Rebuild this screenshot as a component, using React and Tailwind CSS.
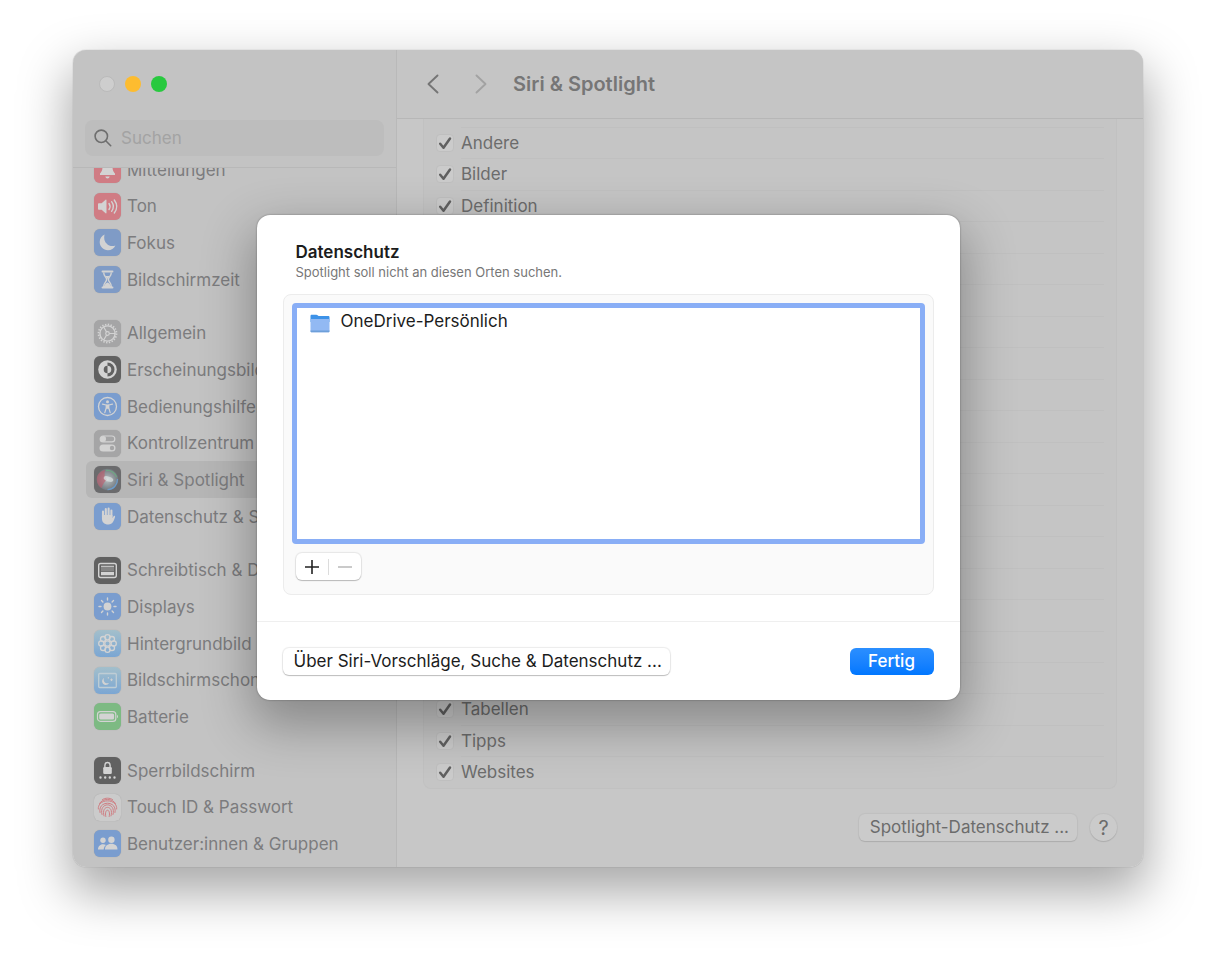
import { useState } from 'react';

const TILES = {
  red: 'bg-[#d07c84]',
  blue: 'bg-[#7a9dcf]',
  indigo: 'bg-[#7f9bc6]',
  gray: 'bg-[#a5a5a6]',
  dark: 'bg-[#616161]',
  siri: 'bg-[#6b6b6d]',
  sky: 'bg-linear-to-b from-[#a3bfcb] to-[#7ba6d3]',
  green: 'bg-[#7dba83]',
  light: 'bg-[#cbcbcb]',
};

const G = '#d3d3d3';

/* ── Glyphs, all drawn on a 27x27 tile ── */
const GLYPHS = {
  bell: (
    <>
      <path d="M13.5 5c-3.6 0-5 2.600-5 5.500 0 4-1 5.500-2.500 7v1.500h15v-1.500c-1.500-1.500-2.500-3-2.500-7 0-2.900-1.400-5.500-5-5.500z" fill={G} />
      <path d="M11.300 20.500h4.400c-.3 1.300-1.100 2-2.200 2s-1.900-.7-2.200-2z" fill={G} />
    </>
  ),
  sound: (
    <>
      <path d="M4 11.200c0-.6.4-1 1-1h2.600l4-3.500c.4-.4.9-.2.9.5v12.600c0 .7-.5.9-.9.500l-4-3.500H5c-.6 0-1-.4-1-1z" fill={G} />
      <path d="M15 10.500c1.300 1.800 1.300 4.200 0 6M17.600 8.700c2.200 2.900 2.200 6.700 0 9.600M20.300 7c3 4 3 9 0 13" fill="none" stroke={G} strokeWidth="1.400" strokeLinecap="round" />
    </>
  ),
  moon: <path d="M10.600 5.600c-3 1.300-4.900 4.200-4.900 7.500 0 4.500 3.700 8.200 8.200 8.200 3.300 0 6.200-2 7.500-4.800-1 .4-1.900.5-2.900.5-4.600 0-8.300-3.700-8.300-8.300 0-1.100.1-2.100.4-3.100z" fill={G} />,
  hourglass: (
    <>
      <path d="M8.500 5.500h10M8.500 21.500h10" stroke={G} strokeWidth="1.900" strokeLinecap="round" />
      <path d="M9.700 6.500c0 4 2.900 4.500 2.900 7s-2.900 3-2.900 7h7.600c0-4-2.900-4.500-2.900-7s2.900-3 2.900-7" fill="none" stroke={G} strokeWidth="1.400" />
      <path d="M11.300 10h4.400l-2.200 3zM10.600 20c0-2 1.500-3 2.900-3.600 1.400.6 2.900 1.600 2.900 3.600z" fill={G} />
    </>
  ),
  gear: (
    <g fill="none" stroke={G}>
      <circle cx="13.500" cy="13.500" r="9" strokeWidth="1.800" strokeDasharray="1.400 1.427" />
      <circle cx="13.500" cy="13.500" r="7.600" strokeWidth="1.400" />
      <circle cx="13.500" cy="13.500" r="1.800" strokeWidth="1.200" />
      <path d="M15.300 13.500h5.800M12.600 12l-2.900-5M12.600 15l-2.900 5" strokeWidth="1.200" />
    </g>
  ),
  contrast: (
    <>
      <circle cx="13.500" cy="13.500" r="9.300" fill={G} />
      <path d="M13.500 6.500a7 7 0 0 1 0 14v-3.200a3.800 3.800 0 0 0 0-7.600z" fill="#616161" />
      <path d="M13.500 9.700a3.800 3.800 0 0 0 0 7.600z" fill="#616161" />
    </>
  ),
  person: (
    <>
      <circle cx="13.500" cy="13.500" r="9" fill="none" stroke={G} strokeWidth="1.300" />
      <circle cx="13.500" cy="8.700" r="1.500" fill={G} />
      <path d="M8.500 11.200l3.700.8v3l-1.400 4.600M18.500 11.200l-3.700.8v3l1.400 4.600" fill="none" stroke={G} strokeWidth="1.200" strokeLinecap="round" strokeLinejoin="round" />
      <path d="M12 11.500h3v4.300h-3z" fill={G} />
    </>
  ),
  switches: (
    <>
      <rect x="6.200" y="6" width="14.600" height="5.800" rx="2.900" fill="none" stroke={G} strokeWidth="1.200" />
      <circle cx="9.200" cy="8.900" r="2.800" fill={G} />
      <rect x="5.500" y="14.500" width="16" height="7" rx="3.500" fill={G} />
      <circle cx="18" cy="18" r="2.200" fill="#a5a5a6" />
    </>
  ),
  siri: (
    <>
      <defs>
        <radialGradient id="orb">
          <stop offset="0" stopColor="#d9dede" />
          <stop offset=".3" stopColor="#a3aaad" />
          <stop offset="1" stopColor="#737a80" />
        </radialGradient>
      </defs>
      <circle cx="13.500" cy="13.500" r="10.700" fill="url(#orb)" />
      <path d="M11 4c-5 1-8.500 5-8.200 9.800.3 4 2 6.500 4.700 8.400C9 18 11 15 13 13.500 11 12.500 10 9 11 4z" fill="#c05a6a" opacity=".6" />
      <path d="M12 4.500c5-.8 9 2.500 10.500 6.500" fill="none" stroke="#6fa783" strokeWidth="1.300" />
      <path d="M23.500 13c0 6-4 10.500-10 10.700" fill="none" stroke="#6c9bc9" strokeWidth="1.300" />
      <ellipse cx="14.500" cy="13" rx="5" ry="2.400" transform="rotate(18 14.500 13)" fill="#d5dcdc" opacity=".8" />
    </>
  ),
  hand: (
    <>
      <path d="M9 14V8.500M11.800 13V6M14.600 13V5.600M17.400 13.500V7.500" stroke={G} strokeWidth="2.100" strokeLinecap="round" />
      <path d="M7.950 12h10.500v3l1-1.600c.7-1 1.900-.5 1.600.6-1 3-2.200 7.500-6.600 7.500-4.500 0-6.500-2.500-6.500-6z" fill={G} />
    </>
  ),
  dock: (
    <>
      <rect x="4.700" y="6.500" width="17.600" height="14" rx="2" fill="none" stroke={G} strokeWidth="1.400" />
      <path d="M7 9h13v5.500H7z" fill="#858585" />
      <path d="M7 8.700h13v1H7zM7 15h13v3.200H7z" fill={G} />
    </>
  ),
  sun: (
    <>
      <circle cx="13.500" cy="13.500" r="3.900" fill={G} />
      <path d="M13.500 5v2M13.500 20v2M5 13.500h2M20 13.500h2M7.500 7.500l1.400 1.400M18.100 18.100l1.400 1.400M7.500 19.500l1.400-1.400M18.100 8.900l1.400-1.400" stroke={G} strokeWidth="1.400" strokeLinecap="round" />
    </>
  ),
  flower: (
    <g fill="none" stroke={G} strokeWidth="1.300">
      <circle cx="13.500" cy="13.500" r="2.700" />
      <circle cx="13.500" cy="7.300" r="2.600" />
      <circle cx="17.900" cy="9.100" r="2.600" />
      <circle cx="19.700" cy="13.500" r="2.600" />
      <circle cx="17.900" cy="17.900" r="2.600" />
      <circle cx="13.500" cy="19.700" r="2.600" />
      <circle cx="9.100" cy="17.900" r="2.600" />
      <circle cx="7.300" cy="13.500" r="2.600" />
      <circle cx="9.100" cy="9.100" r="2.600" />
    </g>
  ),
  saver: (
    <>
      <rect x="4.700" y="6.500" width="17.600" height="14" rx="1" fill="none" stroke="#bfcdd5" strokeWidth="1.300" />
      <path d="M10 11c-1.200 3.200 1.200 6 5 5.200-1.200 1.800-4 2.400-5.700.8-1.700-1.700-1.500-4.900.7-6z" fill={G} />
      <path d="M17.500 11.500v2.600M16.200 12.800h2.600M14.300 10v1.600" stroke={G} strokeWidth=".9" />
    </>
  ),
  battery: (
    <>
      <rect x="3.500" y="8.700" width="18.300" height="9.600" rx="2.900" fill="none" stroke={G} strokeWidth="1.200" />
      <rect x="5.200" y="10.400" width="14.900" height="6.200" rx="1.500" fill={G} />
      <path d="M23 11.800c1.300.5 1.300 2.900 0 3.400z" fill={G} />
    </>
  ),
  lock: (
    <>
      <rect x="9.200" y="10" width="8.600" height="7" rx="1.200" fill={G} />
      <path d="M10.900 10.500V8.200c0-3.700 5.200-3.700 5.200 0v2.300" fill="none" stroke={G} strokeWidth="1.400" />
      <path d="M6.500 20.500h.01M11.200 20.500h.01M15.800 20.500h.01M20.500 20.500h.01" stroke={G} strokeWidth="2.400" strokeLinecap="round" />
    </>
  ),
  finger: (
    <g fill="none" stroke="#cf7f84" strokeWidth="1" strokeLinecap="round">
      <path d="M8.500 5.500c3-1.800 7-1.800 10 0" />
      <path d="M5.500 9.500c3-5.500 13-5.500 16 0" />
      <path d="M4.300 15c-1-11 19.400-11 18.400 0" />
      <path d="M6 18.500c-2.800-12.500 17.800-12.500 15 0" />
      <path d="M8 20.500c-3.500-13 14.500-13 11 0" />
      <path d="M10 21.900c-3.500-11.500 10.500-11.500 7 0" />
      <path d="M11.800 22.500c-2-8.500 5.400-8.500 3.400 0" />
    </g>
  ),
  people: (
    <>
      <circle cx="9" cy="10.200" r="2.700" fill={G} />
      <circle cx="17.400" cy="9.700" r="3.200" fill={G} />
      <path d="M4 19.500c0-3 2-5.300 5-5.300 1.300 0 2.200.3 3 .9-1.300 1-2.100 2.500-2.300 4.400zM11 19.500c0-3.500 2.600-5.700 6.400-5.700s6.100 2.200 6.100 5.700z" fill={G} />
    </>
  ),
};

const GROUPS = [
  {
    grow: 'flex-4',
    items: [
      { label: 'Mitteilungen', icon: 'bell', tile: 'red' },
      { label: 'Ton', icon: 'sound', tile: 'red' },
      { label: 'Fokus', icon: 'moon', tile: 'indigo' },
      { label: 'Bildschirmzeit', icon: 'hourglass', tile: 'indigo' },
    ],
  },
  {
    grow: 'flex-6',
    items: [
      { label: 'Allgemein', icon: 'gear', tile: 'gray' },
      { label: 'Erscheinungsbild', icon: 'contrast', tile: 'dark' },
      { label: 'Bedienungshilfen', icon: 'person', tile: 'blue' },
      { label: 'Kontrollzentrum', icon: 'switches', tile: 'gray' },
      { label: 'Siri & Spotlight', icon: 'siri', tile: 'siri', active: true },
      { label: 'Datenschutz & Sicherheit', icon: 'hand', tile: 'blue' },
    ],
  },
  {
    grow: 'flex-5',
    items: [
      { label: 'Schreibtisch & Dock', icon: 'dock', tile: 'dark' },
      { label: 'Displays', icon: 'sun', tile: 'blue' },
      { label: 'Hintergrundbild', icon: 'flower', tile: 'sky' },
      { label: 'Bildschirmschoner', icon: 'saver', tile: 'sky' },
      { label: 'Batterie', icon: 'battery', tile: 'green' },
    ],
  },
  {
    grow: 'flex-3',
    items: [
      { label: 'Sperrbildschirm', icon: 'lock', tile: 'dark' },
      { label: 'Touch ID & Passwort', icon: 'finger', tile: 'light' },
      { label: 'Benutzer:innen & Gruppen', icon: 'people', tile: 'blue' },
    ],
  },
];

// rows without a label sit behind the sheet
const CATEGORIES = ['Andere', 'Bilder', 'Definition', ...Array(15).fill(null), 'Tabellen', 'Tipps', 'Websites'];

function NavItem({ item }) {
  return (
    <li className="flex-1 min-h-0 flex">
      <a
        href="#"
        aria-current={item.active ? 'page' : undefined}
        className={`flex-1 flex items-center gap-[6px] px-2 rounded-md whitespace-nowrap ${item.active ? 'bg-[#b6b6b6]' : ''}`}
      >
        <span className={`w-[27px] h-[27px] shrink-0 rounded-md shadow-[0_0_1px_rgba(0,0,0,0.2)] ${TILES[item.tile]}`}>
          <svg viewBox="0 0 27 27" className="w-full h-full" aria-hidden="true">{GLYPHS[item.icon]}</svg>
        </span>
        <span className="pt-[2px]">{item.label}</span>
      </a>
    </li>
  );
}

function Sidebar() {
  return (
    <aside className="w-[324px] shrink-0 flex flex-col border-r border-[#b9b9b9] bg-[#c3c3c3]">
      <div className="h-[118px] shrink-0 px-3 border-b border-[#b8b8b8]">
        <div className="flex gap-[10px] px-[14px] pt-[26px]">
          <button type="button" aria-label="Schließen" className="w-4 h-4 rounded-full bg-[#cecece] border border-[#bababa]" />
          <button type="button" aria-label="Minimieren" className="w-4 h-4 rounded-full bg-[#fdbc2f]" />
          <button type="button" aria-label="Zoomen" className="w-4 h-4 rounded-full bg-[#28c93f]" />
        </div>
        <label className="mt-[28px] h-[36px] flex items-center gap-[9px] pl-[9px] rounded-lg bg-[#bdbdbd]">
          <svg viewBox="0 0 18 18" className="w-[18px] h-[18px] shrink-0" fill="none" stroke="#6f6f6f" strokeWidth="1.600" strokeLinecap="round" aria-hidden="true">
            <circle cx="7.300" cy="7.300" r="6.200" />
            <path d="M12 12l4.700 4.700" />
          </svg>
          <input
            type="text"
            placeholder="Suchen"
            aria-label="Suchen"
            className="flex-1 min-w-0 pt-[2px] bg-transparent outline-none text-[17px] placeholder:text-[#a3a3a3]"
          />
        </label>
      </div>
      <nav className="flex-1 min-h-0 overflow-hidden flex flex-col justify-end px-[13px] pb-[5px]">
        <div className="h-[711px] shrink-0 flex flex-col gap-[17px] text-[17px] text-[#7c7c7e]">
          {GROUPS.map(g => (
            <ul key={g.grow} className={`flex flex-col ${g.grow}`}>
              {g.items.map(item => <NavItem key={item.label} item={item} />)}
            </ul>
          ))}
        </div>
      </nav>
    </aside>
  );
}

function CategoryRow({ label }) {
  return (
    <li className="flex-1 min-h-0 flex pl-3 pr-3 text-[17px] text-[#6c6c6c]">
      <label className="flex-1 flex items-center">
        {label && (
          <span className="relative w-[18px] h-[18px]">
            <input type="checkbox" defaultChecked className="block appearance-none w-full h-full rounded-sm bg-[#cbcbcb] border border-[#bfbfbf]" />
            <svg viewBox="0 0 18 18" className="absolute inset-0 pointer-events-none" fill="none" stroke="#606060" strokeWidth="2.500" strokeLinecap="round" strokeLinejoin="round" aria-hidden="true">
              <path d="M4.200 9.800l3.300 4L14 4.500" />
            </svg>
          </span>
        )}
        <span className={`flex-1 self-stretch flex items-center pt-px border-t border-[#c0c0c0] ${label ? 'ml-[7px]' : 'ml-[25px]'}`}>
          {label}
        </span>
      </label>
    </li>
  );
}

function Content() {
  return (
    <section className="flex-1 min-w-0 flex flex-col bg-[#c7c7c7]">
      <header className="h-[69px] shrink-0 flex items-center pl-[30px] border-b border-[#b7b7b7] bg-[#c5c5c5]">
        <button type="button" aria-label="Zurück" className="w-3 h-5">
          <svg viewBox="0 0 12 20" fill="none" stroke="#757575" strokeWidth="1.900" strokeLinecap="round" strokeLinejoin="round"><path d="M10.500 1.500L1.500 10l9 8.500" /></svg>
        </button>
        <button type="button" aria-label="Vorwärts" className="w-3 h-5 ml-9">
          <svg viewBox="0 0 12 20" fill="none" stroke="#a2a2a2" strokeWidth="1.900" strokeLinecap="round" strokeLinejoin="round"><path d="M1.500 1.500l9 8.500-9 8.500" /></svg>
        </button>
        <h1 className="ml-[26px] text-[20px] font-semibold text-[#767676]">Siri & Spotlight</h1>
      </header>
      <div className="flex-1 min-h-0 overflow-hidden flex flex-col justify-end px-[26px] pb-[26px]">
        {/* taller than the pane, so its top edge scrolls under the header */}
        <div className="shrink-0 pt-2 rounded-b-lg bg-[#c5c5c5] border border-t-0 border-[#c1c1c1]">
          <ul className="h-[661px] flex flex-col">
            {CATEGORIES.map((c, i) => <CategoryRow key={i} label={c} />)}
          </ul>
        </div>
        <div className="shrink-0 mt-[25px] flex justify-end gap-[13px] text-[17px] text-[#6c6c6c]">
          <button type="button" className="h-[27px] pl-[11px] pr-2 flex items-center rounded-md bg-[#cbcbcb] shadow-[0_0_1px_1px_rgba(0,0,0,0.04),0_1px_1px_rgba(0,0,0,0.1)]">
            Spotlight-Datenschutz ...
          </button>
          <button type="button" aria-label="Hilfe" className="w-[27px] h-[27px] flex items-center justify-center rounded-full bg-[#cbcbcb] text-[20px] shadow-[0_0_1px_1px_rgba(0,0,0,0.04),0_1px_1px_rgba(0,0,0,0.1)]">
            ?
          </button>
        </div>
      </div>
    </section>
  );
}

function Folder() {
  return (
    <svg viewBox="0 0 20 19" className="w-5 h-[19px] shrink-0" aria-hidden="true">
      <path d="M.5 2c0-.8.500-1.300 1.300-1.300h4.400c.8 0 1.200.2 1.700.7l.7.600h9.600c.8 0 1.300.5 1.300 1.300V8H.5z" fill="#3d92e8" />
      <path d="M.5 5h19v12c0 .8-.5 1.300-1.300 1.300H1.800c-.8 0-1.300-.5-1.300-1.300z" fill="#92b9f3" />
      <path d="M.5 16.600h19v.4c0 .8-.5 1.300-1.300 1.300H1.800c-.8 0-1.300-.5-1.300-1.300z" fill="#6d9fd9" />
    </svg>
  );
}

function PrivacySheet() {
  const [places] = useState(['OneDrive-Persönlich']);

  return (
    <div role="dialog" aria-labelledby="sheet-title" className="w-[703px] rounded-[13px] bg-white text-[#1c1c1c] shadow-[0_0_2px_rgba(0,0,0,0.4),0_20px_50px_6px_rgba(0,0,0,0.3)]">
      <div className="px-[26px] pt-[25px] pb-[26px]">
        <h2 id="sheet-title" className="pl-[13px] text-[17px] leading-6 font-semibold">Datenschutz</h2>
        <p className="pl-[13px] text-[13px] leading-4 text-[#777]">Spotlight soll nicht an diesen Orten suchen.</p>

        <div className="mt-[14px] px-2 pt-2 pb-[14px] rounded-lg border border-[#ececec] bg-[#fafafa]">
          <ul className="h-[241px] border-[5px] border-[#89aef6] rounded-sm bg-white">
            {places.map(p => (
              <li key={p} className="flex items-center gap-[11px] h-[27px] pl-[13px] text-[17px]">
                <span className="pt-1"><Folder /></span>
                {p}
              </li>
            ))}
          </ul>
          <div className="mt-[9px] ml-[4px] inline-flex items-center h-[27px] rounded-md bg-white align-top shadow-[0_0_1px_1px_rgba(0,0,0,0.08),0_1px_1px_rgba(0,0,0,0.2)]">
            <button type="button" aria-label="Hinzufügen" className="w-8 h-full flex items-center justify-center">
              <svg viewBox="0 0 14 14" className="w-[14px] h-[14px]" stroke="#222" strokeWidth="1.600"><path d="M7 0v14M0 7h14" /></svg>
            </button>
            <span className="w-px h-4 bg-[#dcdcdc]" />
            <button type="button" aria-label="Entfernen" disabled className="w-8 h-full flex items-center justify-center">
              <svg viewBox="0 0 14 14" className="w-[14px] h-[14px]" stroke="#bdbdbd" strokeWidth="1.600"><path d="M0 7h14" /></svg>
            </button>
          </div>
        </div>
      </div>

      <div className="flex justify-between px-[26px] pt-[26px] pb-[25px] border-t border-[#efefef] text-[17px]">
        <button type="button" className="h-[27px] pl-[11px] pr-2 flex items-center rounded-md bg-white shadow-[0_0_1px_1px_rgba(0,0,0,0.08),0_1px_1px_rgba(0,0,0,0.2)]">
          Über Siri-Vorschläge, Suche & Datenschutz ...
        </button>
        <button type="button" className="h-[27px] w-[84px] rounded-md bg-linear-to-b from-[#2b8fff] to-[#0077ff] text-white font-medium flex items-center justify-center">
          Fertig
        </button>
      </div>
    </div>
  );
}

export default function App() {
  return (
    <div className="h-screen overflow-hidden bg-white px-[73px] pt-[50px] pb-[97px] font-['Inter','Liberation_Sans',sans-serif]">
      <main className="relative h-full flex overflow-hidden rounded-[13px] shadow-[0_0_1px_rgba(0,0,0,0.4),0_22px_50px_4px_rgba(0,0,0,0.34)]">
        <Sidebar />
        <Content />
        {/* ── Sheet over the window ── */}
        <div className="absolute inset-0 pb-[2px] flex items-center justify-center">
          <PrivacySheet />
        </div>
      </main>
    </div>
  );
}
